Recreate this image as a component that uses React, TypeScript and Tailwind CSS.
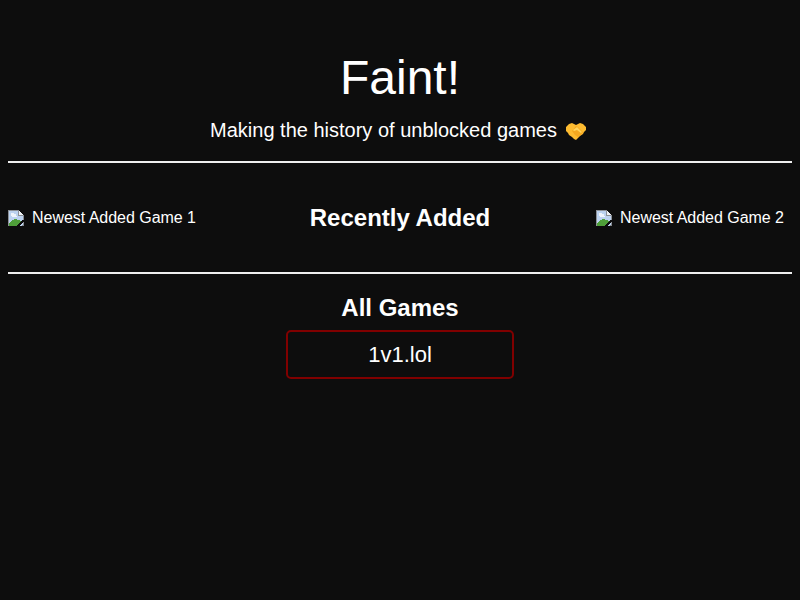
function BrokenImage() {
  return (
    <svg width="16" height="16" viewBox="0 0 16 16" className="shrink-0" shapeRendering="crispEdges">
      <path d="M0 0h11v1h1v1h1v1h1v1h1v1h1v11H0z" fill="#8c9096" />
      <path d="M1 1h9v5h5v10H1z" fill="#bcd2ef" />
      <path d="M3 3h3v1h2v2h1v1H4V6H3z" fill="#eef4fb" />
      <path d="M11 1h1v1h1v1h1v1h1v1h-4z" fill="#eceff3" />
      <path d="M1 13h1v-1h1v-1h1v-1h2V9h3v1h3v1h1v2h-1v1h-1v1h-1v1H1z" fill="#4f9f3a" />
      <path d="M9 16v-1h1v-1h1v-1h1v-1h1v-1h1v-1h2v2h-1v1h-1v1h-1v1h-1v1z" fill="#0d0d0d" />
      <path d="M14 16v-1h1v-1h1v2z" fill="#7f8388" />
    </svg>
  );
}

function Handshake() {
  return (
    <svg width="20" height="18" viewBox="0 0 20 18" className="shrink-0">
      <path d="M0 5l3-3 3-1 4 2 4-2 3 1 3 3v3l-2 2-1 2-3 2-2 2-2 2-2-1-2-2-3-2-1-2-2-2z" fill="#fdbb30" />
      <path d="M6 9l4-5 2 1 5 5-1 2-4 3-3-2z" fill="#f5a81f" />
      <path d="M7 8l4-3 5 5-1 1-4-3-3 1z" fill="#ffd45c" />
    </svg>
  );
}

function NewestGame({ label }: { label: string }) {
  return (
    <a className="flex h-4 items-center text-base text-white">
      <BrokenImage />
      <span className="ml-2 tracking-[-0.03px]">{label}</span>
    </a>
  );
}

export default function App() {
  return (
    <div className="min-h-[600px] bg-[#0d0d0d] px-2 text-white font-['Liberation_Sans',Arial,sans-serif]">
      <header className="flex flex-col items-center pt-[50px]">
        <h1 className="text-5xl leading-[55px] font-normal">Faint!</h1>
        <p className="mt-[14px] flex items-center text-xl leading-[23px]">
          Making the history of unblocked games
          <span className="ml-[9px] mr-1">
            <Handshake />
          </span>
        </p>
      </header>
      <hr className="mt-[19px] border-t-2 border-[#eeeeee]" />
      <section className="grid h-[109px] grid-cols-[1fr_auto_1fr] items-center">
        <NewestGame label="Newest Added Game 1" />
        <h2 className="text-2xl leading-7 font-bold">Recently Added</h2>
        <div className="mr-2 justify-self-end">
          <NewestGame label="Newest Added Game 2" />
        </div>
      </section>
      <hr className="border-t-2 border-[#eeeeee]" />
      <section className="flex flex-col items-center pt-[20px]">
        <h2 className="text-2xl leading-7 font-bold">All Games</h2>
        <button className="mt-2 h-[49px] w-[228px] rounded-[5px] border-2 border-[#800000] text-[22px] text-white">
          1v1.lol
        </button>
      </section>
    </div>
  );
}
